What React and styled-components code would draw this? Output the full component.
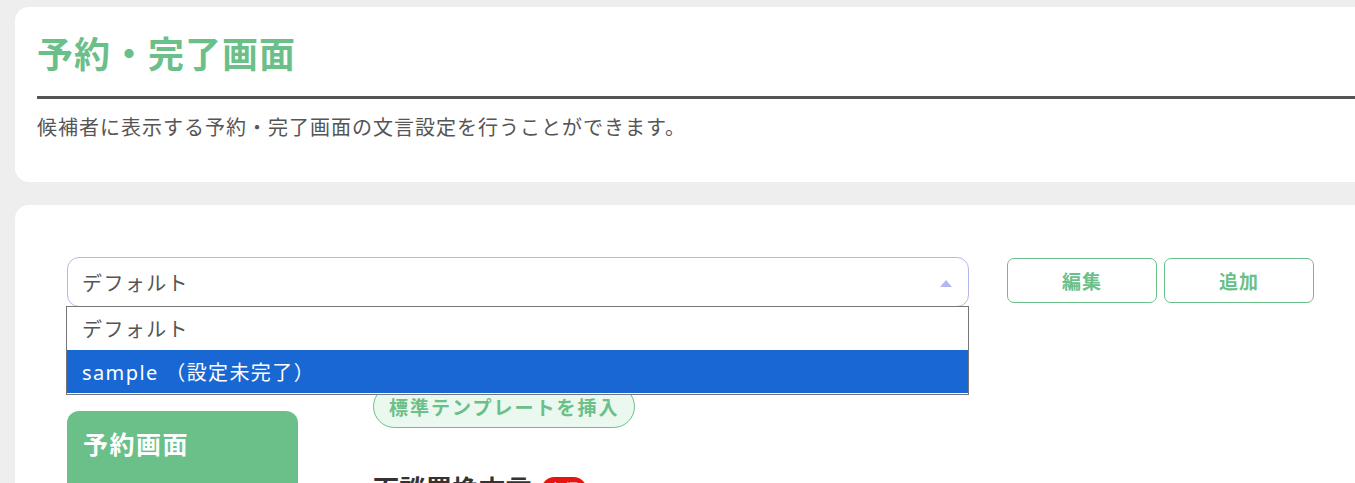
import React from "react";
import styled, { createGlobalStyle } from "styled-components";

const GlobalStyle = createGlobalStyle`
  html, body {
    margin: 0;
    padding: 0;
    overflow: hidden;
    background: #eeeeee;
  }
  body {
    font-family: "Noto Sans", "Noto Sans CJK JP", sans-serif;
    color: #555;
  }
`;

const Page = styled.div`
  width: 1400px;
  padding: 7px 0 0 15px;
  display: flex;
  flex-direction: column;
  gap: 23px;
`;

const Card = styled.section`
  background: #fff;
  border-radius: 14px;
  padding: ${(p) => p.$pad};
  position: relative;
`;

const Title = styled.h1`
  margin: 0;
  font-size: 36px;
  line-height: 44px;
  letter-spacing: 1px;
  font-weight: 700;
  color: #6bbf88;
`;

const Rule = styled.hr`
  margin: 19px 0 0;
  border: 0;
  height: 3px;
  background: #555;
`;

const Lead = styled.p`
  margin: 15px 0 0;
  font-size: 20px;
  line-height: 27px;
  letter-spacing: 1px;
  color: #555;
`;

const SelectRow = styled.div`
  display: flex;
  align-items: flex-start;
  gap: 38px;
`;

const SelectWrap = styled.div`
  position: relative;
  width: 902px;
`;

const SelectBox = styled.div`
  height: 50px;
  box-sizing: border-box;
  border: 1px solid #b3b6f3;
  border-radius: 12px;
  display: flex;
  align-items: center;
  justify-content: space-between;
  padding: 0 16px 0 14px;
  font-size: 20px;
  letter-spacing: 1.4px;
  color: #555;
`;

const Arrow = styled.span`
  width: 0;
  height: 0;
  border-left: 6px solid transparent;
  border-right: 6px solid transparent;
  border-bottom: 7px solid #b3b6f3;
  margin-top: 2px;
`;

const OptionList = styled.ul`
  position: absolute;
  z-index: 5;
  top: 49px;
  left: -1px;
  width: 903px;
  margin: 0;
  padding: 0 0 1px;
  list-style: none;
  background: #fff;
  border: 1px solid #767676;
  box-sizing: border-box;
`;

const Option = styled.li`
  height: 43px;
  display: flex;
  align-items: center;
  padding: 0 15px;
  font-size: 20px;
  letter-spacing: 1.4px;
  color: ${(p) => (p.$active ? "#fff" : "#555")};
  background: ${(p) => (p.$active ? "#1967d2" : "#fff")};
`;

const Buttons = styled.div`
  display: flex;
  gap: 7px;
  margin-top: 1px;
`;

const OutlineButton = styled.button`
  width: 150px;
  height: 45px;
  border: 1px solid #6bbf88;
  border-radius: 7px;
  background: #fff;
  color: #6bbf88;
  font-family: inherit;
  font-size: 19px;
  letter-spacing: 1px;
  font-weight: 700;
`;

const Body = styled.div`
  display: flex;
  gap: 75px;
  margin-top: 78px;
`;

const SideNav = styled.nav`
  width: 231px;
  margin-top: 26px;
`;

const SideItem = styled.div`
  background: #6bbf88;
  color: #fff;
  border-radius: 12px 12px 0 0;
  padding: 16px 16px 40px;
  font-size: 25px;
  line-height: 34px;
  letter-spacing: 1.5px;
  font-weight: 700;
`;

const Main = styled.div`
  display: flex;
  flex-direction: column;
  align-items: flex-start;
`;

const PillButton = styled.button`
  height: 43px;
  padding: 0 15px;
  border: 1px solid #6bbf88;
  border-radius: 22px;
  background: #eaf8ef;
  color: #6bbf88;
  font-family: inherit;
  font-size: 19px;
  letter-spacing: 2px;
  font-weight: 700;
`;

const FieldHead = styled.h2`
  margin: 44px 0 0;
  display: flex;
  align-items: center;
  gap: 10px;
  font-size: 26px;
  line-height: 34px;
  letter-spacing: 0.5px;
  font-weight: 700;
  color: #333;
`;

const Required = styled.span`
  background: #e8140f;
  color: #fff;
  font-size: 14px;
  font-weight: 700;
  line-height: 24px;
  letter-spacing: 0;
  padding: 0 8px;
  border-radius: 12px;
`;

export default function App() {
  return (
    <>
      <GlobalStyle />
      <Page>
        <Card $pad="26px 0 41px 22px">
          <Title>予約・完了画面</Title>
          <Rule />
          <Lead>候補者に表示する予約・完了画面の文言設定を行うことができます。</Lead>
        </Card>
        <Card $pad="52px 0 60px 52px">
          <SelectRow>
            <SelectWrap>
              <SelectBox>
                <span>デフォルト</span>
                <Arrow />
              </SelectBox>
              <OptionList>
                <Option>デフォルト</Option>
                <Option $active>sample （設定未完了）</Option>
              </OptionList>
            </SelectWrap>
            <Buttons>
              <OutlineButton>編集</OutlineButton>
              <OutlineButton>追加</OutlineButton>
            </Buttons>
          </SelectRow>
          <Body>
            <SideNav>
              <SideItem>予約画面</SideItem>
            </SideNav>
            <Main>
              <PillButton>標準テンプレートを挿入</PillButton>
              <FieldHead>
                面談置換文言<Required>必須</Required>
              </FieldHead>
            </Main>
          </Body>
        </Card>
      </Page>
    </>
  );
}
